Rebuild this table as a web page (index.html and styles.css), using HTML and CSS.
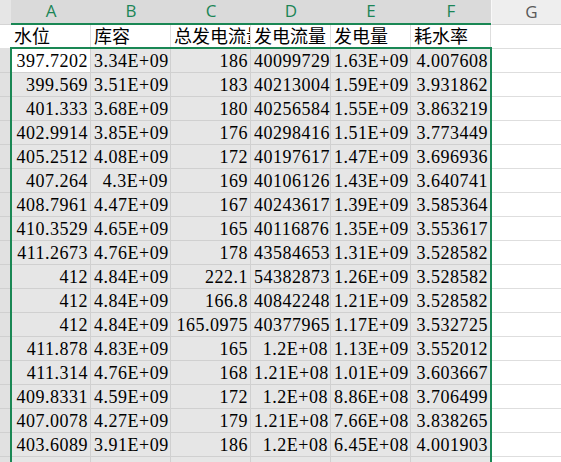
FILE: index.html
```html
<!DOCTYPE html>
<html lang="zh">
<head>
<meta charset="utf-8">
<title>Sheet</title>
<link rel="stylesheet" href="styles.css">
</head>
<body>
<div class="sheet">
  <div class="corner"></div>
  <div class="ch sel-h">A</div><div class="ch sel-h">B</div><div class="ch sel-h">C</div><div class="ch sel-h">D</div><div class="ch sel-h">E</div><div class="ch sel-h">F</div><div class="ch plain-h">G</div>

  <div class="rh rh-plain"></div>
  <div class="c t">水位</div><div class="c t">库容</div><div class="c t">总发电流量</div><div class="c t">发电流量</div><div class="c t">发电量</div><div class="c t">耗水率</div><div class="c"></div>

  <div class="rh"></div><div class="c n act">397.7202</div><div class="c n s">3.34E+09</div><div class="c n s">186</div><div class="c n s">40099729</div><div class="c n s">1.63E+09</div><div class="c n s">4.007608</div><div class="c"></div>
  <div class="rh"></div><div class="c n s">399.569</div><div class="c n s">3.51E+09</div><div class="c n s">183</div><div class="c n s">40213004</div><div class="c n s">1.59E+09</div><div class="c n s">3.931862</div><div class="c"></div>
  <div class="rh"></div><div class="c n s">401.333</div><div class="c n s">3.68E+09</div><div class="c n s">180</div><div class="c n s">40256584</div><div class="c n s">1.55E+09</div><div class="c n s">3.863219</div><div class="c"></div>
  <div class="rh"></div><div class="c n s">402.9914</div><div class="c n s">3.85E+09</div><div class="c n s">176</div><div class="c n s">40298416</div><div class="c n s">1.51E+09</div><div class="c n s">3.773449</div><div class="c"></div>
  <div class="rh"></div><div class="c n s">405.2512</div><div class="c n s">4.08E+09</div><div class="c n s">172</div><div class="c n s">40197617</div><div class="c n s">1.47E+09</div><div class="c n s">3.696936</div><div class="c"></div>
  <div class="rh"></div><div class="c n s">407.264</div><div class="c n s">4.3E+09</div><div class="c n s">169</div><div class="c n s">40106126</div><div class="c n s">1.43E+09</div><div class="c n s">3.640741</div><div class="c"></div>
  <div class="rh"></div><div class="c n s">408.7961</div><div class="c n s">4.47E+09</div><div class="c n s">167</div><div class="c n s">40243617</div><div class="c n s">1.39E+09</div><div class="c n s">3.585364</div><div class="c"></div>
  <div class="rh"></div><div class="c n s">410.3529</div><div class="c n s">4.65E+09</div><div class="c n s">165</div><div class="c n s">40116876</div><div class="c n s">1.35E+09</div><div class="c n s">3.553617</div><div class="c"></div>
  <div class="rh"></div><div class="c n s">411.2673</div><div class="c n s">4.76E+09</div><div class="c n s">178</div><div class="c n s">43584653</div><div class="c n s">1.31E+09</div><div class="c n s">3.528582</div><div class="c"></div>
  <div class="rh"></div><div class="c n s">412</div><div class="c n s">4.84E+09</div><div class="c n s">222.1</div><div class="c n s">54382873</div><div class="c n s">1.26E+09</div><div class="c n s">3.528582</div><div class="c"></div>
  <div class="rh"></div><div class="c n s">412</div><div class="c n s">4.84E+09</div><div class="c n s">166.8</div><div class="c n s">40842248</div><div class="c n s">1.21E+09</div><div class="c n s">3.528582</div><div class="c"></div>
  <div class="rh"></div><div class="c n s">412</div><div class="c n s">4.84E+09</div><div class="c n s">165.0975</div><div class="c n s">40377965</div><div class="c n s">1.17E+09</div><div class="c n s">3.532725</div><div class="c"></div>
  <div class="rh"></div><div class="c n s">411.878</div><div class="c n s">4.83E+09</div><div class="c n s">165</div><div class="c n s">1.2E+08</div><div class="c n s">1.13E+09</div><div class="c n s">3.552012</div><div class="c"></div>
  <div class="rh"></div><div class="c n s">411.314</div><div class="c n s">4.76E+09</div><div class="c n s">168</div><div class="c n s">1.21E+08</div><div class="c n s">1.01E+09</div><div class="c n s">3.603667</div><div class="c"></div>
  <div class="rh"></div><div class="c n s">409.8331</div><div class="c n s">4.59E+09</div><div class="c n s">172</div><div class="c n s">1.2E+08</div><div class="c n s">8.86E+08</div><div class="c n s">3.706499</div><div class="c"></div>
  <div class="rh"></div><div class="c n s">407.0078</div><div class="c n s">4.27E+09</div><div class="c n s">179</div><div class="c n s">1.21E+08</div><div class="c n s">7.66E+08</div><div class="c n s">3.838265</div><div class="c"></div>
  <div class="rh"></div><div class="c n s">403.6089</div><div class="c n s">3.91E+09</div><div class="c n s">186</div><div class="c n s">1.2E+08</div><div class="c n s">6.45E+08</div><div class="c n s">4.001903</div><div class="c"></div>
  <div class="rh"></div><div class="c n s"></div><div class="c n s"></div><div class="c n s"></div><div class="c n s"></div><div class="c n s"></div><div class="c n s"></div><div class="c"></div>

  <div class="selection"></div>
</div>
</body>
</html>
```

FILE: styles.css
```css
html, body {
  margin: 0;
  padding: 0;
  background: #ffffff;
  overflow: hidden;
}

.sheet {
  position: relative;
  display: grid;
  grid-template-columns: 11px repeat(7, 80px);
  grid-template-rows: 25px;
  grid-auto-rows: 24px;
  width: 571px;
  height: 462px;
  overflow: hidden;
  font-family: "Liberation Serif", "Noto Sans CJK SC", serif;
  font-size: 18px;
  color: #000000;
}

.corner {
  background: #e6e6e6;
  border-bottom: 1px solid #d4d4d4;
}

.ch {
  box-sizing: border-box;
  font-family: "Open Sans", "Liberation Sans", sans-serif;
  font-size: 17px;
  line-height: 22px;
  text-align: center;
}

.sel-h {
  background: #dadada;
  color: #1b8556;
  border-bottom: 2px solid #1a8754;
}

.plain-h {
  background: #eeeeee;
  color: #5a5a5a;
  border-left: 1px solid #f8f8f8;
  border-bottom: 1px solid #d6d6d6;
  line-height: 23px;
}

.rh {
  background: #e1e1e1;
  border-bottom: 1px solid #d0d0d0;
}

.rh-plain {
  background: #ffffff;
  border-bottom: 1px solid #e1e1e1;
}

.c {
  box-sizing: border-box;
  border-right: 1px solid #dedede;
  border-bottom: 1px solid #dedede;
  padding: 2px 3px 0 3px;
  line-height: 21px;
  white-space: nowrap;
  overflow: hidden;
  background: #ffffff;
}

.t {
  text-align: left;
}

.n {
  text-align: right;
  letter-spacing: 0.5px;
  padding-right: 2px;
}

.s {
  background: #e6e6e6;
  border-right-color: #d0d0d0;
  border-bottom-color: #d0d0d0;
}

.act {
  background: #ffffff;
  border-right-color: #d0d0d0;
  border-bottom-color: #d0d0d0;
}

.selection {
  position: absolute;
  left: 10px;
  top: 47px;
  width: 482px;
  height: 440px;
  box-sizing: border-box;
  border: 2px solid #1a8754;
  pointer-events: none;
}
```
